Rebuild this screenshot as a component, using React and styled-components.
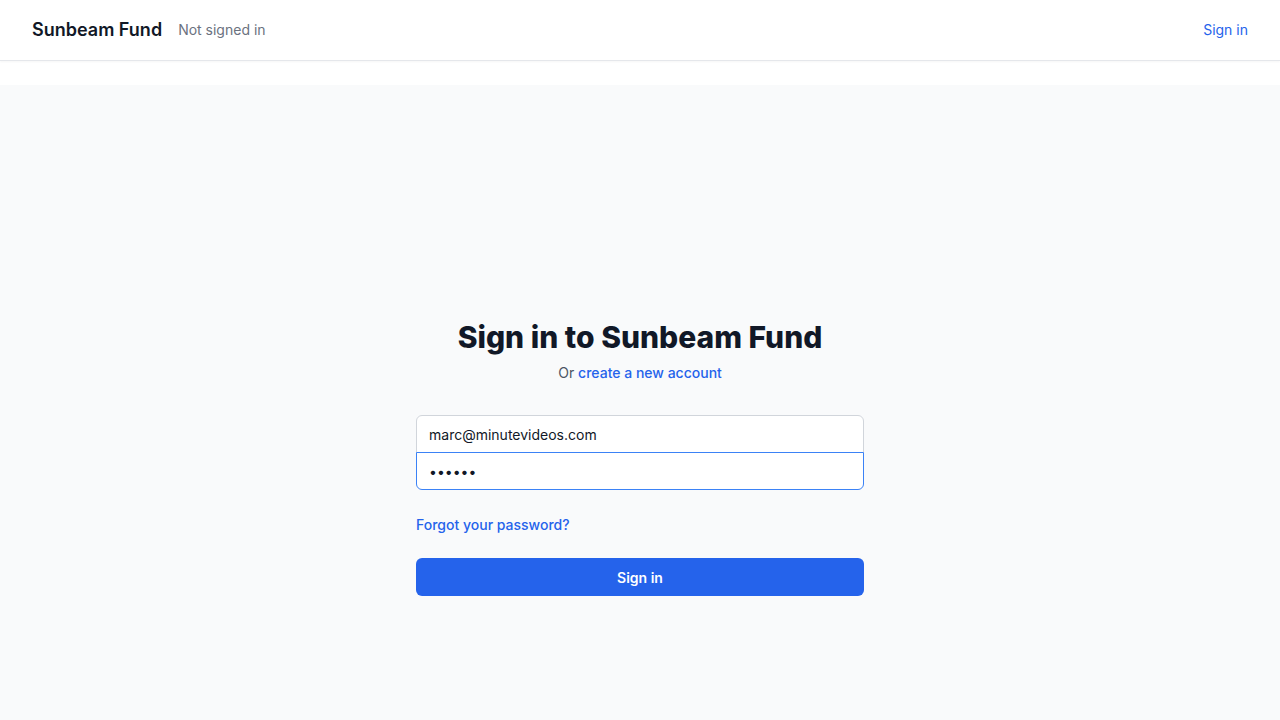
import React from "react"
import styled, { createGlobalStyle } from "styled-components"

const GlobalStyle = createGlobalStyle`
  *, ::after, ::before {
    box-sizing: border-box;
  }
  body {
    margin: 0;
    background: #ffffff;
    font-family: Inter, "Liberation Sans", sans-serif;
    color: #111827;
  }
`

const Header = styled.header`
  height: 61px;
  display: flex;
  align-items: center;
  justify-content: space-between;
  padding: 0 32px 1px;
  border-bottom: 1px solid #e5e7eb;
  box-shadow: 0 1px 2px rgba(0, 0, 0, 0.04);
  background: #ffffff;
`

const Brand = styled.div`
  display: flex;
  align-items: center;
  gap: 16px;
`

const Logo = styled.span`
  font-size: 18px;
  font-weight: 600;
  color: #111827;
`

const Status = styled.span`
  font-size: 14px;
  color: #6b7280;
`

const TextLink = styled.a`
  font-size: 14px;
  font-weight: ${p => p.$weight || 400};
  color: #2563eb;
  text-decoration: none;
  cursor: pointer;
`

const Main = styled.main`
  margin-top: 24px;
  min-height: calc(100vh - 85px);
  background: #f9fafb;
  display: flex;
  justify-content: center;
  padding-top: 234px;
`

const Panel = styled.div`
  width: 448px;
  display: flex;
  flex-direction: column;
`

const Title = styled.h2`
  margin: 0;
  font-size: 30px;
  line-height: 36px;
  font-weight: 800;
  text-align: center;
  color: #111827;
`

const Subtitle = styled.p`
  margin: 8px 0 0;
  font-size: 14px;
  line-height: 20px;
  text-align: center;
  color: #4b5563;
`

const Fields = styled.div`
  margin-top: 32px;
  display: flex;
  flex-direction: column;
`

const Input = styled.input`
  height: 38px;
  width: 100%;
  padding: 0 12px;
  font-family: inherit;
  font-size: 14px;
  color: #111827;
  background: #ffffff;
  border: 1px solid ${p => (p.$focused ? "#3b82f6" : "#d1d5db")};
  border-radius: ${p => (p.$first ? "6px 6px 0 0" : "0 0 6px 6px")};
  margin-top: ${p => (p.$first ? "0" : "-1px")};
  position: relative;
  z-index: ${p => (p.$focused ? 1 : 0)};
  outline: none;
`

const Row = styled.div`
  margin-top: 24px;
  height: 20px;
  display: flex;
  align-items: center;
`

const Button = styled.button`
  margin-top: 24px;
  height: 38px;
  width: 100%;
  border: none;
  border-radius: 6px;
  background: #2563eb;
  color: #ffffff;
  font-family: inherit;
  font-size: 14px;
  font-weight: 600;
  cursor: pointer;
`

export default function App() {
  return (
    <>
      <GlobalStyle />
      <Header>
        <Brand>
          <Logo>Sunbeam Fund</Logo>
          <Status>Not signed in</Status>
        </Brand>
        <TextLink>Sign in</TextLink>
      </Header>
      <Main>
        <Panel>
          <Title>Sign in to Sunbeam Fund</Title>
          <Subtitle>
            Or <TextLink $weight={500}>create a new account</TextLink>
          </Subtitle>
          <Fields>
            <Input $first type="email" defaultValue="marc@minutevideos.com" />
            <Input $focused type="password" defaultValue="secret" />
          </Fields>
          <Row>
            <TextLink $weight={500}>Forgot your password?</TextLink>
          </Row>
          <Button>Sign in</Button>
        </Panel>
      </Main>
    </>
  )
}
